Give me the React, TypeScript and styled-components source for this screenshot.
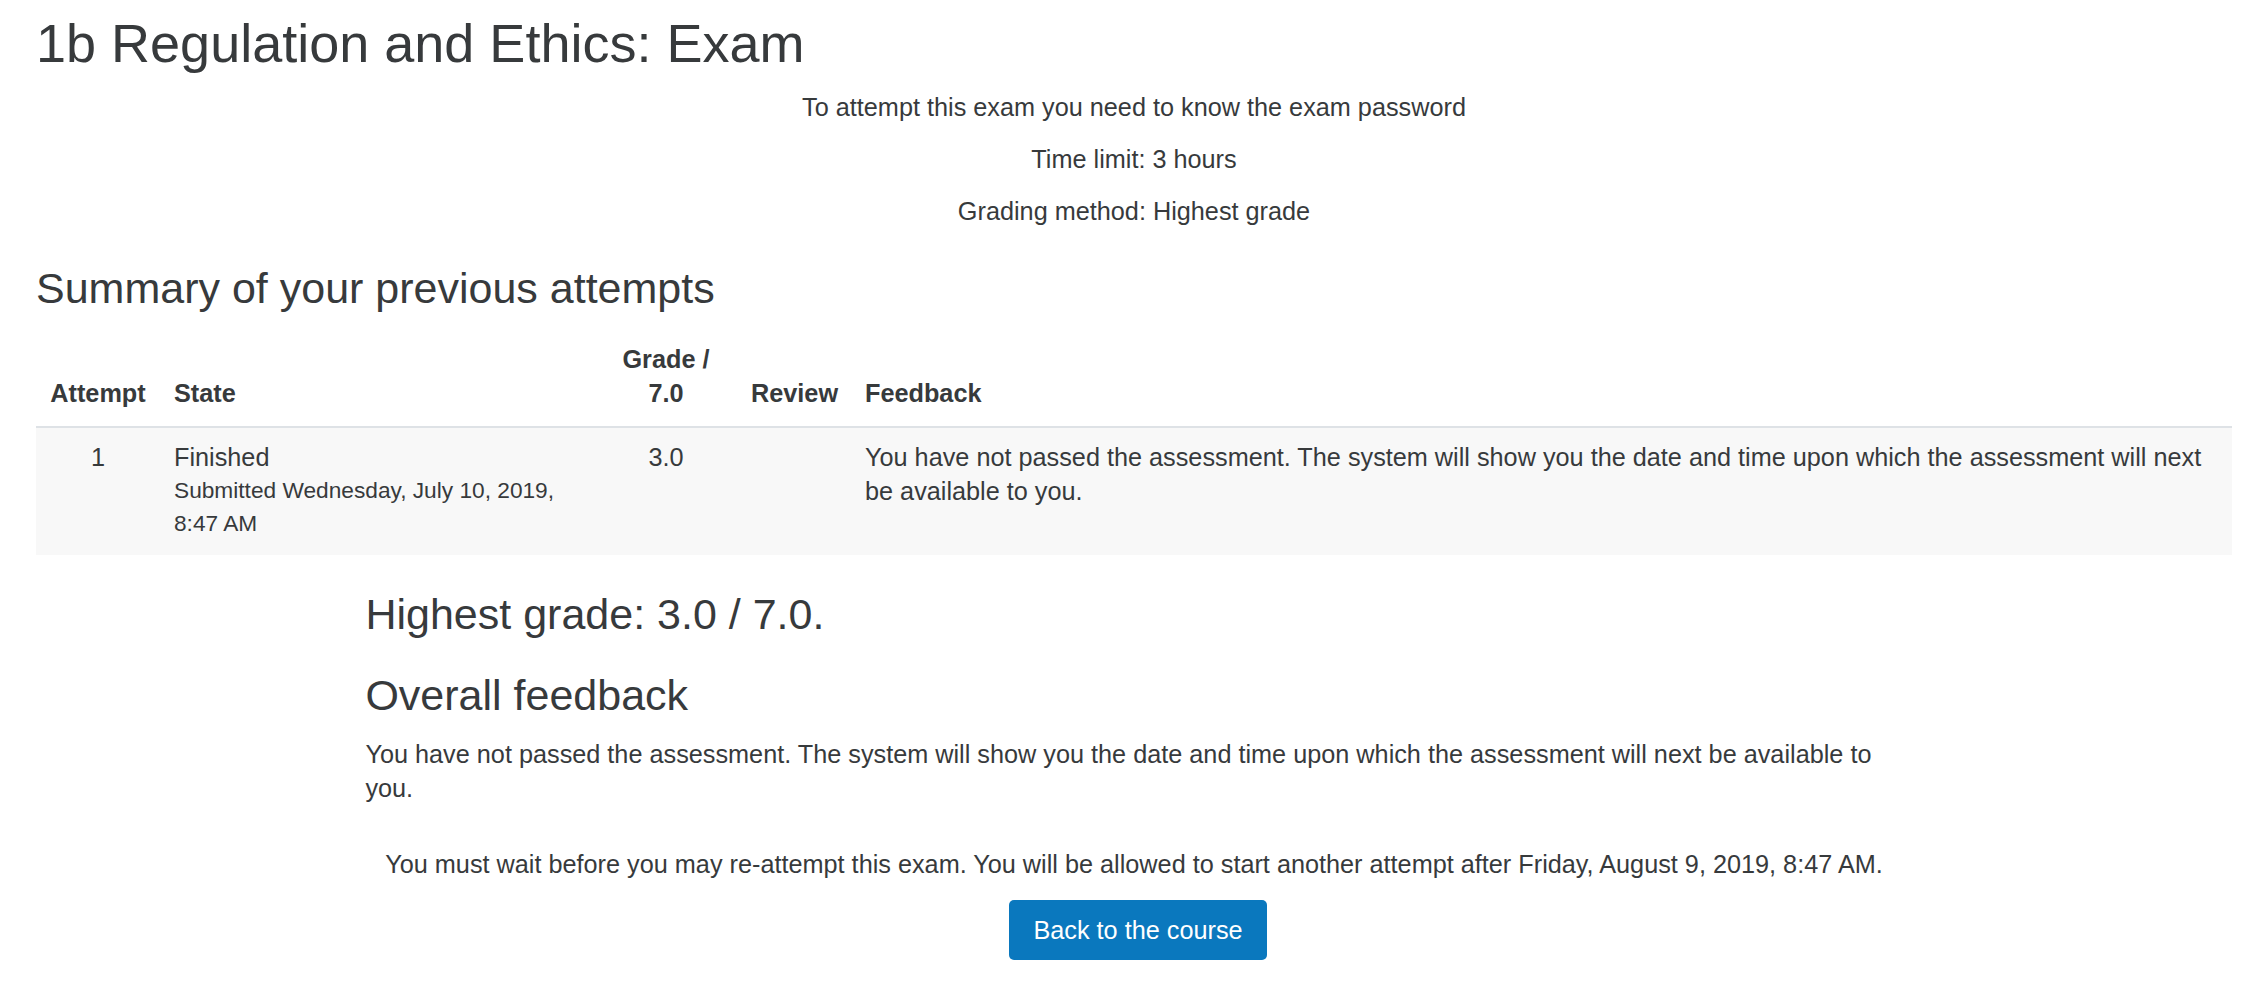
import React from "react";
import styled, { createGlobalStyle } from "styled-components";

const GlobalStyle = createGlobalStyle`
  html, body {
    margin: 0;
    padding: 0;
    background: #ffffff;
  }
  body {
    font-family: "Liberation Sans", Arial, Helvetica, sans-serif;
    color: #373a3c;
    font-size: 25.25px;
    line-height: 34px;
  }
  * { box-sizing: border-box; }
`;

const Page = styled.main`
  padding: 11px 14px 40px 36px;
`;

const Title = styled.h2`
  margin: 0 0 14.5px;
  font-size: 54px;
  line-height: 64.8px;
  font-weight: 400;
`;

const InfoBox = styled.div`
  text-align: center;
`;

const InfoLine = styled.p`
  margin: 0 0 18px;
`;

const SectionHeading = styled.h3`
  margin: 35px 0 13.4px;
  font-size: 43px;
  line-height: 51.6px;
  font-weight: 400;
`;

const AttemptsTable = styled.table`
  width: 100%;
  table-layout: fixed;
  border-collapse: collapse;
`;

type Align = { $align?: "left" | "center" };

const HeadCell = styled.th<Align>`
  padding: 14px 14px 16px;
  vertical-align: bottom;
  text-align: ${(p) => p.$align ?? "left"};
  font-weight: 700;
  border-bottom: 2px solid #dee2e6;
`;

const BodyRow = styled.tr`
  background: #f8f8f8;
`;

const BodyCell = styled.td<Align>`
  padding: 12px 14px 15px;
  vertical-align: top;
  text-align: ${(p) => p.$align ?? "left"};
`;

const StateDetails = styled.span`
  display: block;
  font-size: 22.7px;
  line-height: 33px;
`;

const FeedbackBox = styled.section`
  width: 70%;
  margin: 33.3px auto 0;
`;

const GradeHeading = styled.h3<{ $spaced?: boolean }>`
  margin: ${(p) => (p.$spaced ? "29.4px" : "0")} 0 0;
  font-size: 43px;
  line-height: 51.6px;
  font-weight: 400;
`;

const FeedbackText = styled.p`
  margin: 16px 0 0;
`;

const WaitNotice = styled.p`
  margin: 42px 0 0;
  text-align: center;
`;

const ButtonRow = styled.div`
  display: flex;
  justify-content: center;
  margin-top: 19px;
  padding-left: 8px;
`;

const BackButton = styled.button`
  font-family: inherit;
  font-size: 25.25px;
  line-height: 34px;
  color: #ffffff;
  background: #0a78be;
  border: none;
  border-radius: 5px;
  padding: 13px 24.5px;
  cursor: pointer;
`;

const feedbackMessage =
  "You have not passed the assessment. The system will show you the date and time upon which the assessment will next be available to you.";

export default function App() {
  return (
    <>
      <GlobalStyle />
      <Page>
        <Title>1b Regulation and Ethics: Exam</Title>
        <InfoBox>
          <InfoLine>To attempt this exam you need to know the exam password</InfoLine>
          <InfoLine>Time limit: 3 hours</InfoLine>
          <InfoLine>Grading method: Highest grade</InfoLine>
        </InfoBox>
        <SectionHeading>Summary of your previous attempts</SectionHeading>
        <AttemptsTable>
          <colgroup>
            <col style={{ width: 124 }} />
            <col style={{ width: 435 }} />
            <col style={{ width: 142 }} />
            <col style={{ width: 114 }} />
            <col />
          </colgroup>
          <thead>
            <tr>
              <HeadCell $align="center">Attempt</HeadCell>
              <HeadCell>State</HeadCell>
              <HeadCell $align="center">
                Grade /<br />7.0
              </HeadCell>
              <HeadCell $align="center">Review</HeadCell>
              <HeadCell>Feedback</HeadCell>
            </tr>
          </thead>
          <tbody>
            <BodyRow>
              <BodyCell $align="center">1</BodyCell>
              <BodyCell>
                Finished
                <StateDetails>Submitted Wednesday, July 10, 2019, 8:47 AM</StateDetails>
              </BodyCell>
              <BodyCell $align="center">3.0</BodyCell>
              <BodyCell $align="center"></BodyCell>
              <BodyCell>{feedbackMessage}</BodyCell>
            </BodyRow>
          </tbody>
        </AttemptsTable>
        <FeedbackBox>
          <GradeHeading>Highest grade: 3.0 / 7.0.</GradeHeading>
          <GradeHeading $spaced>Overall feedback</GradeHeading>
          <FeedbackText>{feedbackMessage}</FeedbackText>
        </FeedbackBox>
        <WaitNotice>
          You must wait before you may re-attempt this exam. You will be allowed to start another
          attempt after Friday, August 9, 2019, 8:47 AM.
        </WaitNotice>
        <ButtonRow>
          <BackButton type="button">Back to the course</BackButton>
        </ButtonRow>
      </Page>
    </>
  );
}
